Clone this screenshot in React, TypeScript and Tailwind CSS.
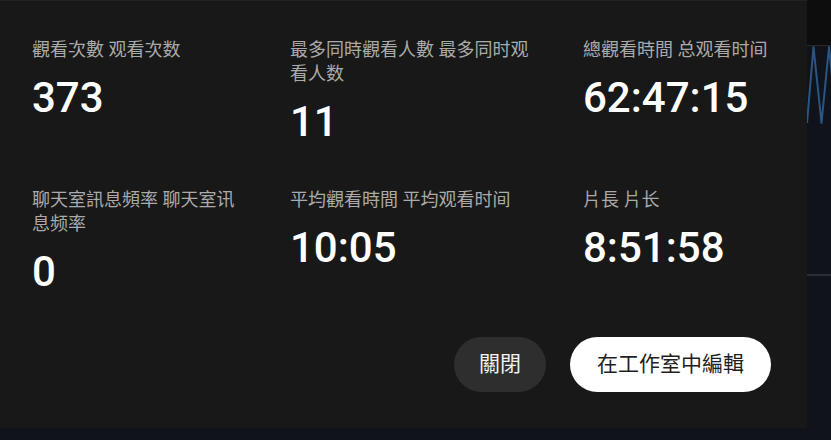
const stats = [
  { label: '觀看次數 观看次数', value: '373' },
  { label: '最多同時觀看人數 最多同时观看人数', value: '11' },
  { label: '總觀看時間 总观看时间', value: '62:47:15' },
  { label: '聊天室訊息頻率 聊天室讯息频率', value: '0' },
  { label: '平均觀看時間 平均观看时间', value: '10:05' },
  { label: '片長 片长', value: '8:51:58' },
]

function Stat({ label, value }: { label: string; value: string }) {
  return (
    <div className="flex flex-col">
      <div className="text-[18px] leading-6 text-[#aaaaaa]">{label}</div>
      <div className="mt-3 text-[42px] font-medium leading-[48px] text-white">{value}</div>
    </div>
  )
}

export default function App() {
  return (
    <div
      className="flex h-[440px] w-[831px] overflow-hidden bg-[#10131a]"
      style={{ fontFamily: 'Roboto, "Noto Sans CJK TC", sans-serif' }}
    >
      <div className="flex h-[428px] w-[807px] shrink-0 flex-col border-t border-[#222222] bg-[#181818] pb-9 pl-8 pr-9 pt-[37px]">
        <div className="grid grid-cols-[214px_44px_253px_40px_1fr] gap-y-[42px]">
          {stats.map((s, i) => (
            <>
              <Stat key={s.label} label={s.label} value={s.value} />
              {i % 3 !== 2 ? <div /> : null}
            </>
          ))}
        </div>

        <div className="mt-[41px] flex justify-end gap-6">
          <button
            type="button"
            className="h-[55px] rounded-full bg-[#2e2e2e] px-[25px] text-[21px] text-[#f1f1f1]"
          >
            關閉
          </button>
          <button
            type="button"
            className="h-[55px] rounded-full bg-white px-[27px] text-[21px] text-[#1f1f1f]"
          >
            在工作室中編輯
          </button>
        </div>
      </div>

      <div className="flex flex-1 flex-col">
        <div className="h-[46px] border-b border-[#26282c] bg-[#0d0d0e]" />
        <div className="h-[228px]">
          <svg width="24" height="228" viewBox="0 0 24 228" fill="none">
            <polyline
              points="0,77 6.5,1 14.5,77 22,1 26,40"
              stroke="#2b5583"
              strokeWidth="2"
              strokeLinejoin="round"
            />
          </svg>
        </div>
        <div className="h-[2px] bg-[#2a2e35]" />
      </div>
    </div>
  )
}
